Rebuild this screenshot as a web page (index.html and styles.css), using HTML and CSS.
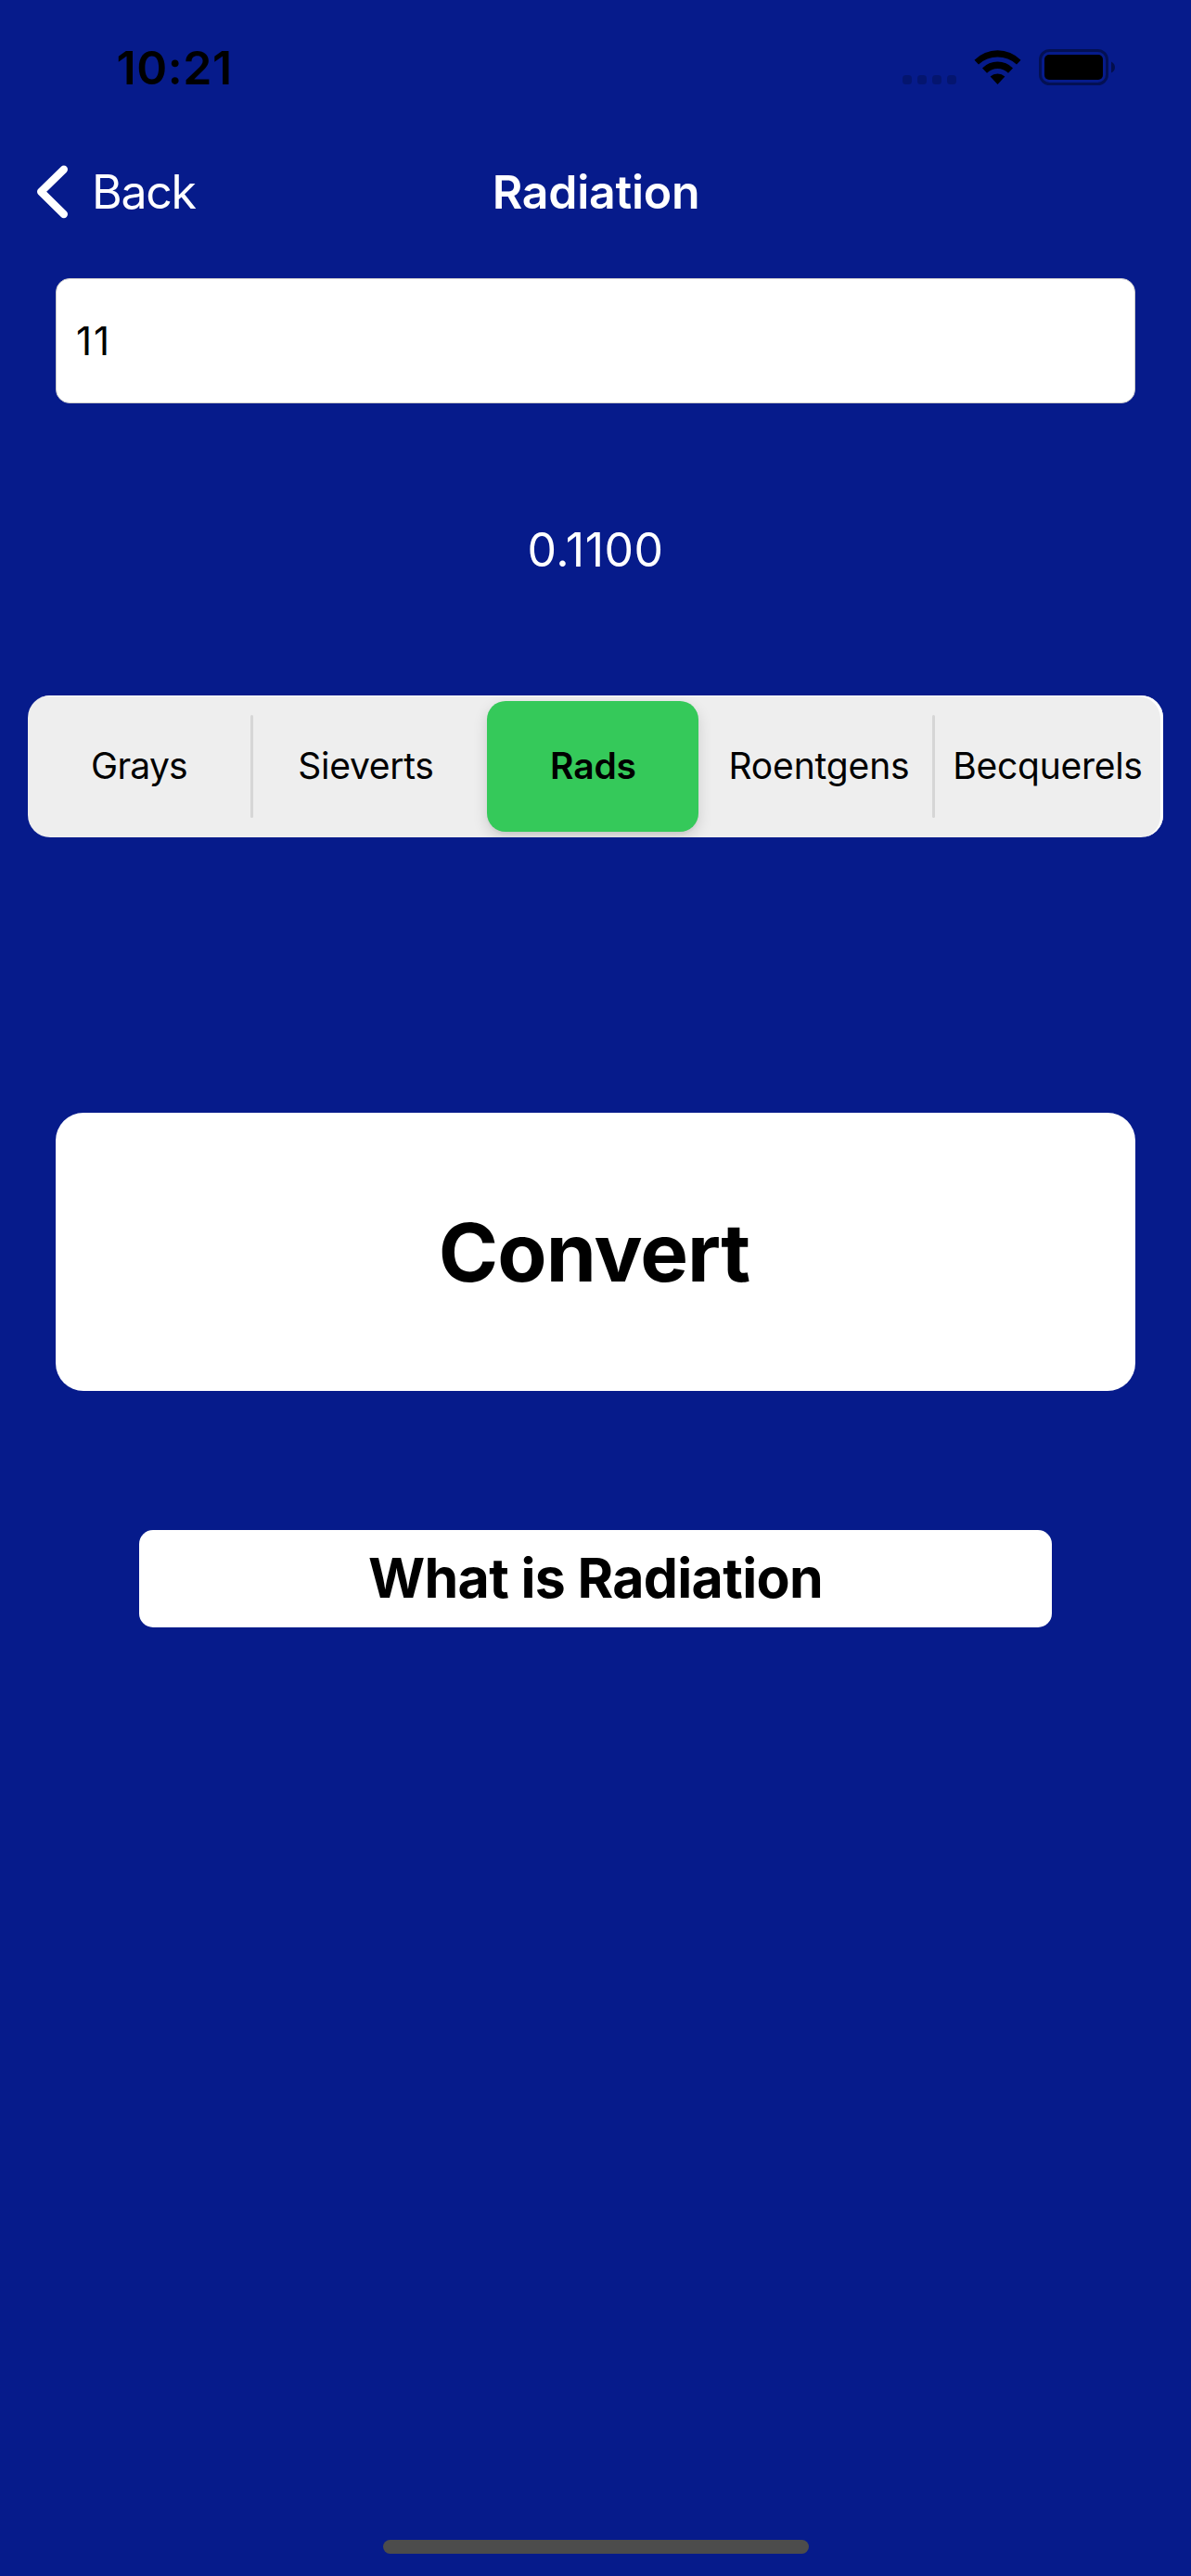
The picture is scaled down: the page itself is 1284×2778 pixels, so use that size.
FILE: index.html
```html
<!DOCTYPE html>
<html lang="en">
<head>
<meta charset="utf-8">
<title>Radiation</title>
<link rel="stylesheet" href="styles.css">
</head>
<body>
<div class="screen">
  <div class="status">
    <span class="time">10:21</span>
    <div class="status-icons">
      <svg width="58" height="39" viewBox="0 0 58 39" fill="#000" fill-opacity=".2">
        <rect x="0" y="28" width="10" height="10" rx="3.5"/>
        <rect x="16" y="28" width="10" height="10" rx="3.5"/>
        <rect x="32" y="28" width="10" height="10" rx="3.5"/>
        <rect x="48" y="28" width="10" height="10" rx="3.5"/>
      </svg>
      <svg width="51" height="39" viewBox="0 0 51 39">
        <path d="M.5 11.8A35 35 0 0 1 50.5 11.8L46 16.5A30.3 30.3 0 0 0 5 16.5Z"/>
        <path d="M9 20.5A23 23 0 0 1 42 20.5L37 25.7A16.4 16.4 0 0 0 14 25.7Z"/>
        <path d="M17.6 29.6A11.6 11.6 0 0 1 33.4 29.6L25.5 38Z"/>
      </svg>
      <svg width="82" height="39" viewBox="0 0 82 39">
        <rect x="1.5" y="1.5" width="72" height="36" rx="10" fill="none" stroke="#000" stroke-opacity=".4" stroke-width="3"/>
        <rect x="6" y="6" width="63" height="27" rx="5"/>
        <path d="M78 13.5Q82 15.5 82 19.5T78 25.5Z" fill-opacity=".45"/>
      </svg>
    </div>
  </div>

  <header class="nav">
    <a class="back">
      <svg width="33" height="58" viewBox="0 0 33 58" fill="none" stroke="#fff" stroke-width="8.4" stroke-linecap="round" stroke-linejoin="round"><path d="M28.8 4.8L4.2 28.8L28.8 53"/></svg>
      <span>Back</span>
    </a>
    <h1 class="title">Radiation</h1>
  </header>

  <div class="field">11</div>
  <div class="result">0.1100</div>

  <div class="segments">
    <div class="segment grays">Grays</div>
    <i class="divider"></i>
    <div class="segment sieverts">Sieverts</div>
    <div class="segment selected">Rads</div>
    <div class="segment roentgens">Roentgens</div>
    <i class="divider"></i>
    <div class="segment becquerels">Becquerels</div>
  </div>

  <div class="button convert">Convert</div>
  <div class="button about">What is Radiation</div>

  <div class="home-indicator"></div>
</div>
</body>
</html>
```
FILE: styles.css
```css
* { box-sizing: border-box; }

body {
  margin: 0;
  background: #061b8b;
  font-family: Inter, "Liberation Sans", sans-serif;
  color: #000;
}

.screen {
  display: flex;
  flex-direction: column;
  width: 1284px;
  height: 2778px;
  padding-bottom: 24px;
}

.status {
  display: flex;
  justify-content: space-between;
  align-items: center;
  height: 146px;
  padding: 0 82px 0 125.5px;
}

.time {
  font-size: 50px;
  font-weight: 600;
  letter-spacing: .6px;
}

.status-icons {
  display: flex;
  gap: 19px;
  padding-bottom: 1px;
}

.status-icons svg, .back svg { display: block; }

.nav {
  display: grid;
  grid-template-columns: 1fr auto 1fr;
  align-items: center;
  height: 122px;
  padding: 0 40px;
  color: #fff;
  font-size: 50px;
}

.back {
  display: flex;
  align-items: center;
  gap: 26px;
  letter-spacing: -1.3px;
}

.title {
  margin: 0;
  padding-left: 1px;
  font-size: 50px;
  font-weight: 600;
  letter-spacing: -.25px;
}

.field {
  display: flex;
  align-items: center;
  height: 135px;
  margin: 32px 60px 0;
  padding-left: 21px;
  padding-bottom: 1px;
  border: 1px solid #ccc;
  border-radius: 15px;
  background: #fff;
  font-size: 42px;
  letter-spacing: 1.9px;
}

.result {
  height: 90px;
  margin-top: 113px;
  color: #fff;
  font-size: 50px;
  line-height: 90px;
  letter-spacing: .49px;
  text-align: center;
}

.segments {
  display: grid;
  grid-template-columns: 240px 3px 252px 228px 252px 3px 246px;
  align-items: center;
  height: 153px;
  margin: 112px 30px 0;
  overflow: hidden;
  border-radius: 24px;
  background: #eee;
  box-shadow: inset -3px 1px 0 #fff;
  font-size: 39px;
}

.segment {
  padding-bottom: 2px;
  text-align: center;
}

.grays { letter-spacing: -.76px; }

.sieverts {
  padding-right: 9px;
  letter-spacing: -.29px;
}

.roentgens {
  padding-left: 8px;
  letter-spacing: -.15px;
}

.becquerels {
  padding-right: 3px;
  letter-spacing: -.27px;
}

.selected {
  height: 141px;
  padding-left: 1px;
  border-radius: 20px;
  background: #35c95a;
  box-shadow: 0 6px 16px rgba(0, 0, 0, .14), 0 3px 3px rgba(0, 0, 0, .04);
  font-weight: 600;
  line-height: 139px;
  letter-spacing: -.16px;
}

.divider {
  height: 111px;
  border-radius: 1.5px;
  background: #d6d6d6;
}

.button {
  display: flex;
  justify-content: center;
  align-items: center;
  background: #fff;
  font-weight: 700;
}

.convert {
  height: 300px;
  margin: 297px 60px 0;
  padding-right: 3px;
  border-radius: 30px;
  font-size: 87px;
  letter-spacing: -.9px;
}

.about {
  height: 105px;
  margin: 150px 150px 0;
  padding-bottom: 2px;
  border-radius: 15px;
  font-size: 59px;
  letter-spacing: -.67px;
}

.home-indicator {
  width: 459px;
  height: 15px;
  margin: auto auto 0;
  border-radius: 8px;
  background: #4c4c4c;
}
```
